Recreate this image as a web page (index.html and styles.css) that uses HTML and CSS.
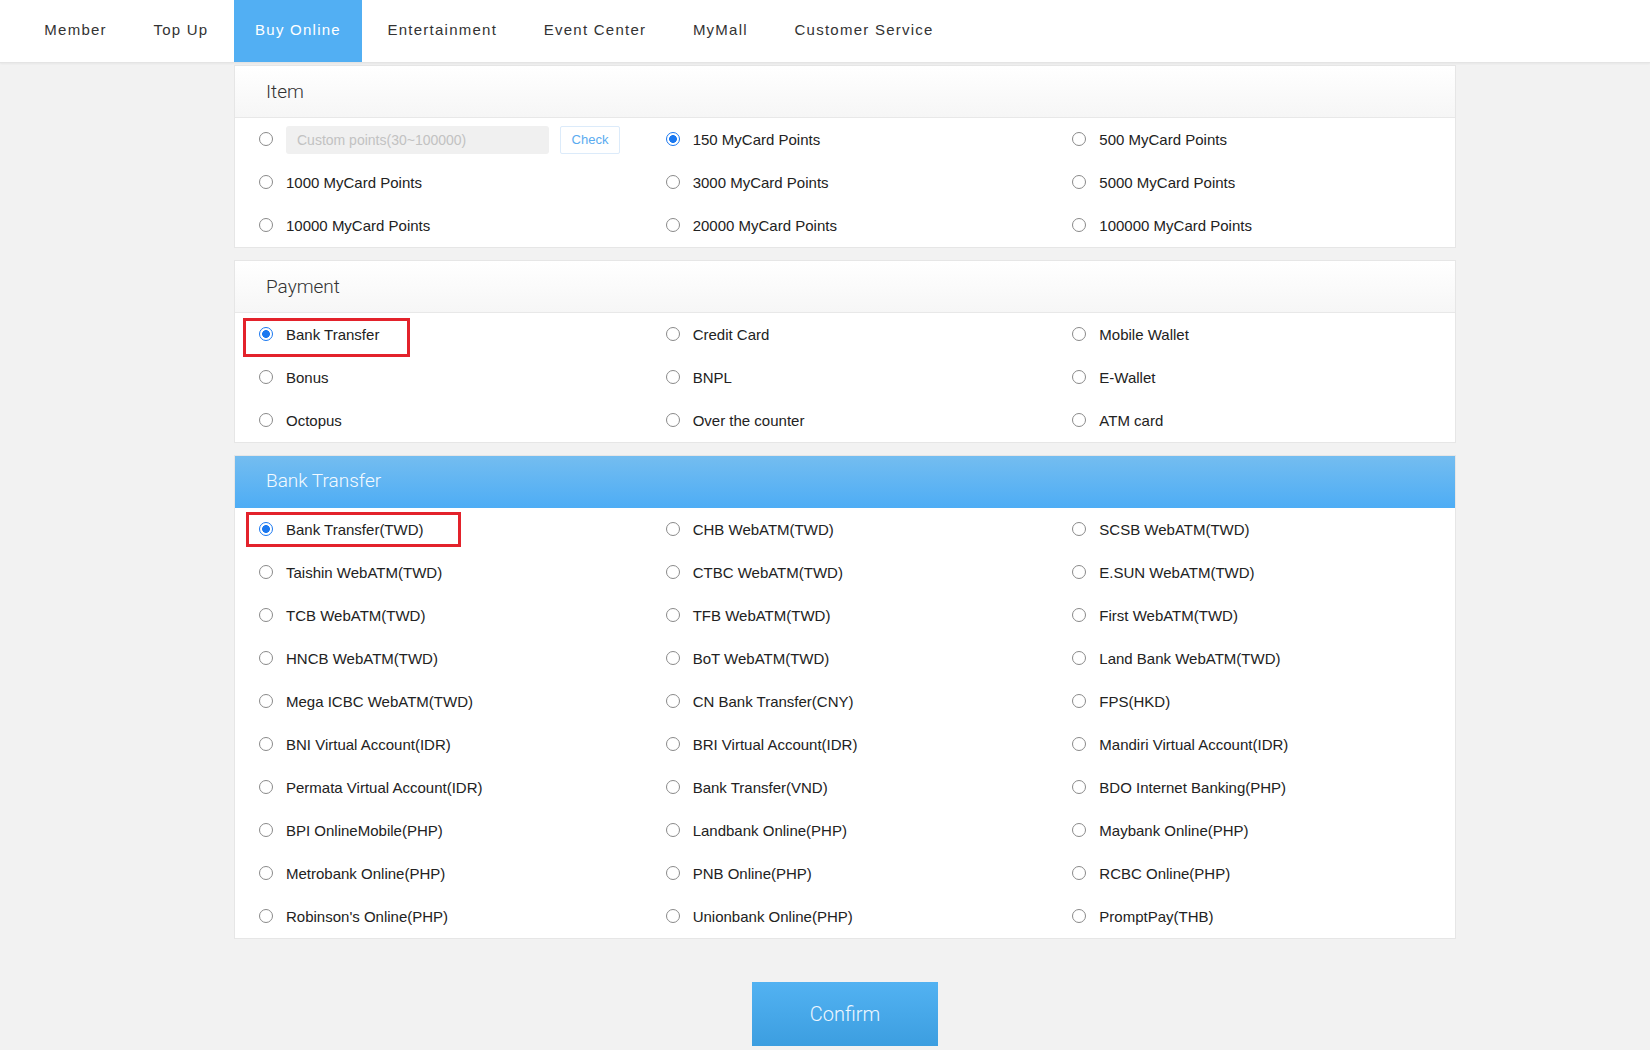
FILE: index.html
```html
<!DOCTYPE html>
<html lang="en">
<head>
<meta charset="utf-8">
<title>MyCard - Buy Online</title>
<link rel="stylesheet" href="styles.css">
</head>
<body>
<nav class="topnav">
  <a class="nav-item">Member</a>
  <a class="nav-item">Top Up</a>
  <a class="nav-item active">Buy Online</a>
  <a class="nav-item">Entertainment</a>
  <a class="nav-item">Event Center</a>
  <a class="nav-item">MyMall</a>
  <a class="nav-item">Customer Service</a>
</nav>

<main class="content">
  <section class="panel">
    <div class="panel-head">Item</div>
    <div class="grid">
      <label class="opt"><input type="radio" name="item" class="rd"><span class="custom"><span class="custom-input">Custom points(30~100000)</span><span class="check-btn">Check</span></span></label>
      <label class="opt"><input type="radio" name="item" class="rd" checked><span class="txt">150 MyCard Points</span></label>
      <label class="opt"><input type="radio" name="item" class="rd"><span class="txt">500 MyCard Points</span></label>
      <label class="opt"><input type="radio" name="item" class="rd"><span class="txt">1000 MyCard Points</span></label>
      <label class="opt"><input type="radio" name="item" class="rd"><span class="txt">3000 MyCard Points</span></label>
      <label class="opt"><input type="radio" name="item" class="rd"><span class="txt">5000 MyCard Points</span></label>
      <label class="opt"><input type="radio" name="item" class="rd"><span class="txt">10000 MyCard Points</span></label>
      <label class="opt"><input type="radio" name="item" class="rd"><span class="txt">20000 MyCard Points</span></label>
      <label class="opt"><input type="radio" name="item" class="rd"><span class="txt">100000 MyCard Points</span></label>
    </div>
  </section>

  <section class="panel">
    <div class="panel-head">Payment</div>
    <div class="grid">
      <label class="opt"><input type="radio" name="pay" class="rd" checked><span class="txt">Bank Transfer</span><span class="mark mark-pay"></span></label>
      <label class="opt"><input type="radio" name="pay" class="rd"><span class="txt">Credit Card</span></label>
      <label class="opt"><input type="radio" name="pay" class="rd"><span class="txt">Mobile Wallet</span></label>
      <label class="opt"><input type="radio" name="pay" class="rd"><span class="txt">Bonus</span></label>
      <label class="opt"><input type="radio" name="pay" class="rd"><span class="txt">BNPL</span></label>
      <label class="opt"><input type="radio" name="pay" class="rd"><span class="txt">E-Wallet</span></label>
      <label class="opt"><input type="radio" name="pay" class="rd"><span class="txt">Octopus</span></label>
      <label class="opt"><input type="radio" name="pay" class="rd"><span class="txt">Over the counter</span></label>
      <label class="opt"><input type="radio" name="pay" class="rd"><span class="txt">ATM card</span></label>
    </div>
  </section>

  <section class="panel">
    <div class="panel-head blue">Bank Transfer</div>
    <div class="grid">
      <label class="opt"><input type="radio" name="bank" class="rd" checked><span class="txt">Bank Transfer(TWD)</span><span class="mark mark-bank"></span></label>
      <label class="opt"><input type="radio" name="bank" class="rd"><span class="txt">CHB WebATM(TWD)</span></label>
      <label class="opt"><input type="radio" name="bank" class="rd"><span class="txt">SCSB WebATM(TWD)</span></label>
      <label class="opt"><input type="radio" name="bank" class="rd"><span class="txt">Taishin WebATM(TWD)</span></label>
      <label class="opt"><input type="radio" name="bank" class="rd"><span class="txt">CTBC WebATM(TWD)</span></label>
      <label class="opt"><input type="radio" name="bank" class="rd"><span class="txt">E.SUN WebATM(TWD)</span></label>
      <label class="opt"><input type="radio" name="bank" class="rd"><span class="txt">TCB WebATM(TWD)</span></label>
      <label class="opt"><input type="radio" name="bank" class="rd"><span class="txt">TFB WebATM(TWD)</span></label>
      <label class="opt"><input type="radio" name="bank" class="rd"><span class="txt">First WebATM(TWD)</span></label>
      <label class="opt"><input type="radio" name="bank" class="rd"><span class="txt">HNCB WebATM(TWD)</span></label>
      <label class="opt"><input type="radio" name="bank" class="rd"><span class="txt">BoT WebATM(TWD)</span></label>
      <label class="opt"><input type="radio" name="bank" class="rd"><span class="txt">Land Bank WebATM(TWD)</span></label>
      <label class="opt"><input type="radio" name="bank" class="rd"><span class="txt">Mega ICBC WebATM(TWD)</span></label>
      <label class="opt"><input type="radio" name="bank" class="rd"><span class="txt">CN Bank Transfer(CNY)</span></label>
      <label class="opt"><input type="radio" name="bank" class="rd"><span class="txt">FPS(HKD)</span></label>
      <label class="opt"><input type="radio" name="bank" class="rd"><span class="txt">BNI Virtual Account(IDR)</span></label>
      <label class="opt"><input type="radio" name="bank" class="rd"><span class="txt">BRI Virtual Account(IDR)</span></label>
      <label class="opt"><input type="radio" name="bank" class="rd"><span class="txt">Mandiri Virtual Account(IDR)</span></label>
      <label class="opt"><input type="radio" name="bank" class="rd"><span class="txt">Permata Virtual Account(IDR)</span></label>
      <label class="opt"><input type="radio" name="bank" class="rd"><span class="txt">Bank Transfer(VND)</span></label>
      <label class="opt"><input type="radio" name="bank" class="rd"><span class="txt">BDO Internet Banking(PHP)</span></label>
      <label class="opt"><input type="radio" name="bank" class="rd"><span class="txt">BPI OnlineMobile(PHP)</span></label>
      <label class="opt"><input type="radio" name="bank" class="rd"><span class="txt">Landbank Online(PHP)</span></label>
      <label class="opt"><input type="radio" name="bank" class="rd"><span class="txt">Maybank Online(PHP)</span></label>
      <label class="opt"><input type="radio" name="bank" class="rd"><span class="txt">Metrobank Online(PHP)</span></label>
      <label class="opt"><input type="radio" name="bank" class="rd"><span class="txt">PNB Online(PHP)</span></label>
      <label class="opt"><input type="radio" name="bank" class="rd"><span class="txt">RCBC Online(PHP)</span></label>
      <label class="opt"><input type="radio" name="bank" class="rd"><span class="txt">Robinson's Online(PHP)</span></label>
      <label class="opt"><input type="radio" name="bank" class="rd"><span class="txt">Unionbank Online(PHP)</span></label>
      <label class="opt"><input type="radio" name="bank" class="rd"><span class="txt">PromptPay(THB)</span></label>
    </div>
  </section>

  <div class="actions">
    <button class="confirm">Confirm</button>
  </div>
</main>
</body>
</html>
```

FILE: styles.css
```css
html, body {
  margin: 0;
  padding: 0;
}
body {
  background: #f2f2f2;
  font-family: "Liberation Sans", Arial, sans-serif;
  color: #222;
}

/* top navigation */
.topnav {
  display: flex;
  gap: 4px;
  height: 62px;
  padding-left: 23px;
  background: #fff;
  border-bottom: 1px solid #e4e4e4;
  box-shadow: 0 1px 2px rgba(0, 0, 0, 0.05);
}
.nav-item {
  display: flex;
  align-items: center;
  padding: 0 21.3px 4px;
  font-size: 15px;
  letter-spacing: 1.25px;
  color: #333;
  cursor: pointer;
}
.nav-item.active {
  background: #52aff3;
  color: #fff;
}

/* content */
.content {
  width: 1222px;
  margin-left: 234px;
  padding-top: 2px;
}
.panel {
  background: #fff;
  border: 1px solid #e6e6e6;
  margin-bottom: 12px;
}
.panel-head {
  height: 51px;
  display: flex;
  align-items: center;
  padding-left: 31px;
  font-family: Roboto, "Liberation Sans", sans-serif;
  font-weight: 300;
  font-size: 19px;
  color: #333;
  background: linear-gradient(#ffffff, #f6f6f6);
  border-bottom: 1px solid #e8e8e8;
}
.panel-head.blue {
  color: #f4faff;
  background: linear-gradient(#74bdf0, #4eadf5);
  border-bottom: 1px solid #4eadf5;
  padding-bottom: 3px;
  height: 48px;
}

.grid {
  display: grid;
  grid-template-columns: repeat(3, 1fr);
  grid-auto-rows: 43px;
}
.opt {
  position: relative;
  display: flex;
  align-items: center;
  padding-left: 24px;
  font-size: 15px;
  color: #222;
  cursor: pointer;
}

/* radios */
.rd {
  appearance: none;
  -webkit-appearance: none;
  width: 14px;
  height: 14px;
  margin: 0 13px 0 0;
  border: 1px solid #8a8a8a;
  border-radius: 50%;
  background: #fff;
  flex: none;
  position: relative;
  top: -1px;
}
.rd:checked {
  border-color: #1a78f0;
  background: radial-gradient(circle at center, #1a78f0 0 3.6px, #fff 4.2px);
}

/* custom points */
.custom {
  display: flex;
  align-items: center;
  gap: 11px;
}
.custom-input {
  width: 252px;
  height: 28px;
  padding-left: 11px;
  display: flex;
  align-items: center;
  background: #f0f0f0;
  border-radius: 3px;
  font-size: 14px;
  color: #c2c2c2;
}
.check-btn {
  width: 58px;
  height: 26px;
  border: 1px solid #dcebfa;
  border-radius: 2px;
  display: flex;
  align-items: center;
  justify-content: center;
  font-size: 13px;
  color: #5aabf0;
  background: #fff;
}

/* red highlight annotations */
.mark {
  position: absolute;
  border: 3px solid #e3222b;
  pointer-events: none;
}
.mark-pay {
  left: 8px;
  top: 5px;
  width: 161px;
  height: 33px;
}
.mark-bank {
  left: 11px;
  top: 4px;
  width: 209px;
  height: 29px;
}

/* confirm */
.actions {
  display: flex;
  justify-content: center;
  padding-top: 31px;
}
.confirm {
  width: 186px;
  height: 64px;
  border: 0;
  border-radius: 0;
  background: linear-gradient(#52b2f2, #3c9ee0);
  color: #eef7ff;
  font-family: Roboto, "Liberation Sans", sans-serif;
  font-weight: 300;
  font-size: 20px;
  cursor: pointer;
}
```
